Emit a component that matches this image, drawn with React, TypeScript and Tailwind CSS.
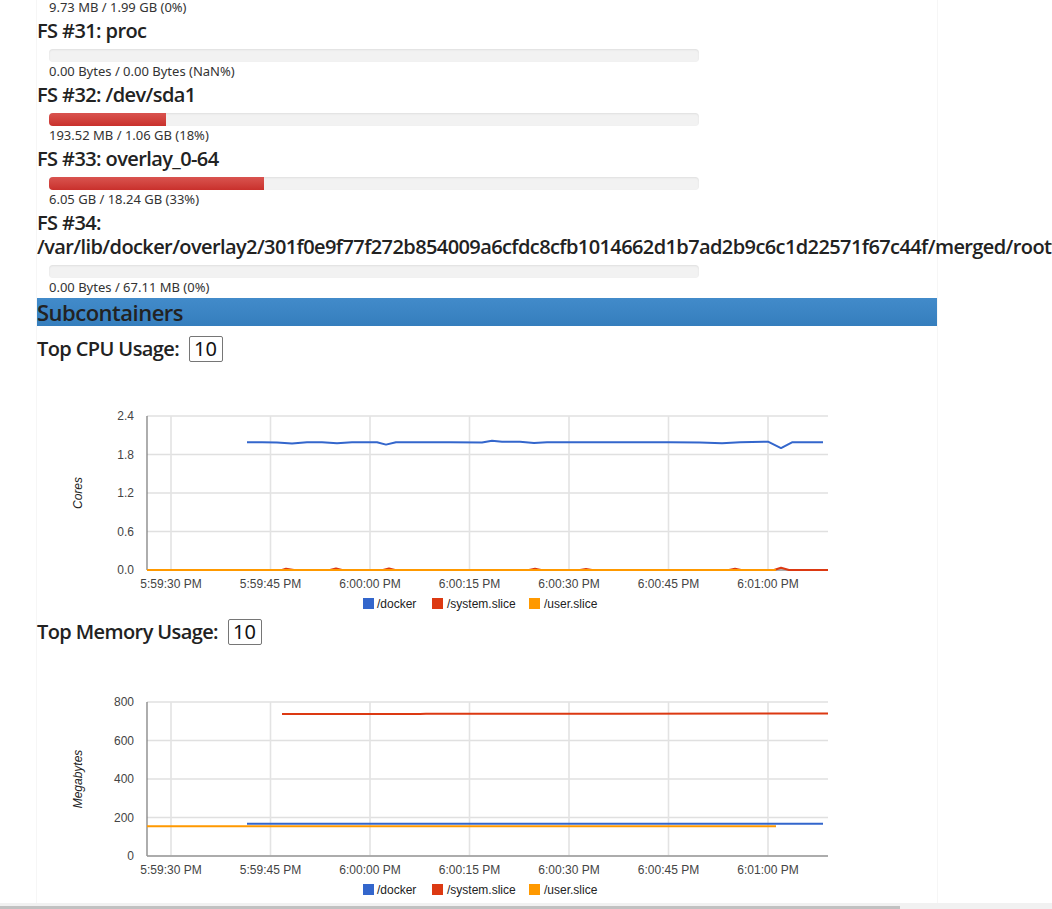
import React from "react";

type Pt = [number, number];

interface FsEntry {
  id: number;
  name: string;
  usage: string;
  pct: number;
}

const filesystems: FsEntry[] = [
  { id: 31, name: "proc", usage: "0.00 Bytes / 0.00 Bytes (NaN%)", pct: 0 },
  { id: 32, name: "/dev/sda1", usage: "193.52 MB / 1.06 GB (18%)", pct: 18 },
  { id: 33, name: "overlay_0-64", usage: "6.05 GB / 18.24 GB (33%)", pct: 33 },
  {
    id: 34,
    name: "/var/lib/docker/overlay2/301f0e9f77f272b854009a6cfdc8cfb1014662d1b7ad2b9c6c1d22571f67c44f/merged/rootfs",
    usage: "0.00 Bytes / 67.11 MB (0%)",
    pct: 0,
  },
];

// x values are page pixels, y values are data units
const cpuSeries: { color: string; points: Pt[] }[] = [
  {
    color: "#3366cc",
    points: [
      [247, 1.99], [262, 1.99], [277, 1.985], [292, 1.97], [307, 1.99], [322, 1.99],
      [337, 1.975], [352, 1.99], [377, 1.99], [386, 1.955], [396, 1.99], [420, 1.99],
      [450, 1.99], [482, 1.985], [492, 2.015], [502, 2.0], [520, 2.0], [534, 1.98],
      [547, 1.99], [580, 1.99], [610, 1.99], [640, 1.99], [670, 1.99], [700, 1.985],
      [722, 1.975], [740, 1.99], [768, 2.0], [781, 1.9], [792, 1.99], [810, 1.99],
      [823, 1.99],
    ],
  },
  {
    color: "#dc3912",
    points: [
      [282, 0], [286, 0.02], [294, 0], [330, 0], [336, 0.025], [342, 0], [383, 0],
      [389, 0.025], [395, 0], [529, 0], [535, 0.02], [541, 0], [580, 0], [586, 0.015],
      [592, 0], [729, 0], [735, 0.02], [741, 0], [774, 0], [781, 0.035], [789, 0],
      [828, 0],
    ],
  },
  { color: "#ff9900", points: [[147, 0], [776, 0]] },
];

const memSeries: { color: string; points: Pt[] }[] = [
  {
    color: "#dc3912",
    points: [[282, 738], [420, 738], [426, 739], [620, 739], [760, 740], [828, 740]],
  },
  { color: "#3366cc", points: [[247, 168], [823, 168]] },
  { color: "#ff9900", points: [[147, 155], [776, 155]] },
];

const timeLabels = [
  "5:59:30 PM",
  "5:59:45 PM",
  "6:00:00 PM",
  "6:00:15 PM",
  "6:00:30 PM",
  "6:00:45 PM",
  "6:01:00 PM",
];

const legend = [
  { label: "/docker", color: "#3366cc", sq: 326, tx: 340 },
  { label: "/system.slice", color: "#dc3912", sq: 395, tx: 410 },
  { label: "/user.slice", color: "#ff9900", sq: 492, tx: 507 },
];

const LEFT = 110;
const RIGHT = 791;
const PLOT_H = 154;
const chartFont = "'Liberation Sans', Arial, sans-serif";

const LineChart: React.FC<{
  height: number;
  plotTop: number;
  max: number;
  ticks: string[];
  title: string;
  series: { color: string; points: Pt[] }[];
}> = ({ height, plotTop, max, ticks, title, series }) => {
  const bottom = plotTop + PLOT_H;
  const y = (v: number) => bottom - (v / max) * PLOT_H;

  return (
    <svg width={900} height={height} className="block shrink-0">
      {/* horizontal gridlines + y labels */}
      {ticks.map((t, i) => {
        const gy = bottom - (i * PLOT_H) / (ticks.length - 1);
        return (
          <g key={t}>
            <line x1={LEFT} x2={RIGHT} y1={gy} y2={gy} stroke="#e0e0e0" strokeWidth={1.4} />
            <text x={97} y={gy + 4} textAnchor="end" fontFamily={chartFont} fontSize={12} fill="#444">
              {t}
            </text>
          </g>
        );
      })}
      {/* vertical gridlines + x labels */}
      {timeLabels.map((t, i) => {
        const gx = 134 + i * 99.5;
        return (
          <g key={t}>
            <line x1={gx} x2={gx} y1={plotTop} y2={bottom} stroke="#e3e3e3" strokeWidth={1.6} />
            <text x={gx} y={bottom + 17.5} textAnchor="middle" fontFamily={chartFont} fontSize={12} fill="#444">
              {t}
            </text>
          </g>
        );
      })}
      <line x1={LEFT} x2={LEFT} y1={plotTop} y2={bottom} stroke="#777" strokeWidth={1.2} />
      <line x1={LEFT} x2={RIGHT} y1={bottom} y2={bottom} stroke="#999" strokeWidth={1.4} />

      {series.map((s) => (
        <path
          key={s.color}
          d={s.points
            .map((p, i) => `${i ? "L" : "M"}${p[0] - 37} ${y(p[1]).toFixed(1)}`)
            .join(" ")}
          fill="none"
          stroke={s.color}
          strokeWidth={2}
          strokeLinejoin="round"
        />
      ))}

      <text
        transform={`translate(45 ${plotTop + PLOT_H / 2}) rotate(-90)`}
        textAnchor="middle"
        fontFamily={chartFont}
        fontSize={12}
        fontStyle="italic"
        fill="#222"
      >
        {title}
      </text>

      {legend.map((l) => (
        <g key={l.label}>
          <rect x={l.sq} y={bottom + 28} width={11} height={11} fill={l.color} />
          <text x={l.tx} y={bottom + 38} fontFamily={chartFont} fontSize={12} fill="#222">
            {l.label}
          </text>
        </g>
      ))}
    </svg>
  );
};

const UsageRow: React.FC<{ label: string; className?: string }> = ({ label, className }) => (
  <div className={`flex items-center gap-[10px] h-[26px] ${className ?? ""}`}>
    <span className="font-['Open_Sans','Noto_Sans',sans-serif] text-[20px] font-semibold tracking-[-0.6px] leading-[24px] text-[#222]">
      {label}
    </span>
    <div className="h-[26px] w-[34px] border border-[#767676] rounded-[2px] flex items-center pl-[4px] text-[20px] text-[#111]">
      10
    </div>
  </div>
);

export default function App() {
  return (
    <div className="h-screen w-full overflow-hidden flex flex-col bg-white font-['Noto_Sans',sans-serif] text-[#333]">
      <div className="flex-1 min-h-0 overflow-hidden">
        <div className="ml-[36px] w-[902px] min-h-full border-x border-[#f6f6f6]">
          <div className="pl-[12px] mt-[-1px] text-[13px] leading-[17px]">9.73 MB / 1.99 GB (0%)</div>

          {filesystems.map((fs) => (
            <div key={fs.id} className="mt-[3px]">
              <div className="font-['Open_Sans','Noto_Sans',sans-serif] text-[20px] font-semibold tracking-[-0.6px] leading-[24px] text-[#222]">
                FS #{fs.id}: {fs.name}
              </div>
              <div className="ml-[12px] mt-[6px] w-[650px] h-[13px] rounded-[4px] bg-[#f2f2f2] shadow-[inset_0_1px_2px_rgba(0,0,0,0.08)] overflow-hidden">
                {fs.pct > 0 && (
                  <div
                    className="h-full bg-linear-to-b from-[#d9534f] to-[#c9302c]"
                    style={{ width: `${fs.pct}%` }}
                  />
                )}
              </div>
              <div className="pl-[12px] mt-[1px] text-[13px] leading-[17px]">{fs.usage}</div>
            </div>
          ))}

          <div className="mt-[2px] h-[28px] bg-linear-to-b from-[#428bca] to-[#357ebd] font-['Open_Sans','Noto_Sans',sans-serif] text-[22px] font-semibold tracking-[-0.5px] leading-[28px] text-[#222]">
            Subcontainers
          </div>

          <UsageRow label="Top CPU Usage:" className="mt-[10px]" />
          <LineChart
            height={257}
            plotTop={54}
            max={2.4}
            ticks={["0.0", "0.6", "1.2", "1.8", "2.4"]}
            title="Cores"
            series={cpuSeries}
          />

          <UsageRow label="Top Memory Usage:" />
          <LineChart
            height={258}
            plotTop={57}
            max={800}
            ticks={["0", "200", "400", "600", "800"]}
            title="Megabytes"
            series={memSeries}
          />
        </div>
      </div>
      {/* horizontal scrollbar strip */}
      <div className="h-[6px] shrink-0 bg-[#f1f1f1] flex flex-col justify-end">
        <div className="h-[3px] w-[900px] bg-[#c1c1c1]" />
      </div>
    </div>
  );
}
